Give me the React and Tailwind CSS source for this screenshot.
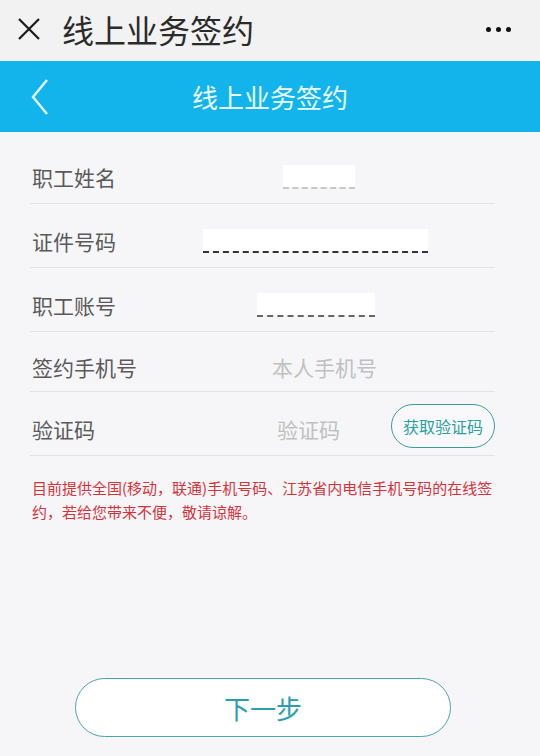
import React from "react";

const font = { fontFamily: '"Noto Sans CJK SC", "Noto Sans", sans-serif' };

function Row({ label, children, h = "h-[64px]" }) {
  return (
    <div className={`flex items-center ${h} border-b border-[#e2e2e4] pt-[12px]`}>
      <div className="w-[170px] shrink-0 pl-[2px] text-[21px] text-[#5a5a5a]">{label}</div>
      <div className="flex flex-1 items-center">{children}</div>
    </div>
  );
}

function Masked({ ml, w, dash }) {
  return (
    <div className={`flex flex-col ${ml} -mt-[2px]`}>
      <div className={`h-[22px] ${w} bg-white`} />
      <div className={`${w} h-[2px] border-b-[2px] border-dashed ${dash}`} />
    </div>
  );
}

export default function App() {
  return (
    <div className="w-[540px] h-[756px] overflow-hidden bg-[#f6f6f8] flex flex-col" style={font}>
      {/* WeChat top bar */}
      <div className="h-[61px] bg-[#f2f2f2] flex items-center px-[17px] border-b-[3px] border-[#f7eef2] shrink-0">
        <svg width="24" height="24" viewBox="0 0 24 24" className="shrink-0">
          <path d="M2 2 L22 22 M22 2 L2 22" stroke="#1a1a1a" strokeWidth="2.2" />
        </svg>
        <div className="ml-[21px] text-[32px] leading-none text-[#2a2a2a]">线上业务签约</div>
        <div className="ml-auto mr-[12px] flex gap-[5px]">
          <span className="block w-[5px] h-[5px] rounded-full bg-[#111]" />
          <span className="block w-[5px] h-[5px] rounded-full bg-[#111]" />
          <span className="block w-[5px] h-[5px] rounded-full bg-[#111]" />
        </div>
      </div>

      {/* Blue header */}
      <div className="h-[71px] bg-[#13b3ec] flex items-center shrink-0 relative">
        <svg width="20" height="38" viewBox="0 0 20 38" className="ml-[30px]">
          <path d="M17 2 L3 19 L17 36" stroke="#e8fbff" strokeWidth="2.4" fill="none" />
        </svg>
        <div className="absolute left-0 right-0 text-center text-[26px] text-[#eafcff] leading-none">线上业务签约</div>
      </div>

      {/* Form */}
      <div className="ml-[30px] w-[465px] mt-[8px]">
        <Row label="职工姓名">
          <Masked ml="ml-[83px]" w="w-[72px]" dash="border-[#c8c8c8]" />
        </Row>
        <Row label="证件号码">
          <Masked ml="ml-[3px]" w="w-[225px]" dash="border-[#333]" />
        </Row>
        <Row label="职工账号">
          <Masked ml="ml-[57px]" w="w-[118px]" dash="border-[#666]" />
        </Row>
        <Row label="签约手机号" h="h-[60px]">
          <div className="ml-[72px] text-[21px] text-[#c0c0c0]">本人手机号</div>
        </Row>
        <Row label="验证码">
          <div className="ml-[77px] text-[21px] text-[#c0c0c0]">验证码</div>
          <div className="ml-auto -mt-[8px] h-[44px] w-[104px] rounded-full border border-[#3a9c9c] bg-white/40 flex items-center justify-center text-[16px] text-[#2aa0a0]">
            获取验证码
          </div>
        </Row>
      </div>

      <div className="mt-[20px] ml-[32px] w-[470px] text-[15px] leading-[24px] text-[#d6323a]">
        目前提供全国(移动，联通)手机号码、江苏省内电信手机号码的在线签约，若给您带来不便，敬请谅解。
      </div>

      <div className="mt-auto mb-[19px] ml-[75px] w-[376px] h-[59px] rounded-full border border-[#4aa3ad] bg-white flex items-center justify-center text-[26px] text-[#2a9db0]">
        下一步
      </div>
    </div>
  );
}
